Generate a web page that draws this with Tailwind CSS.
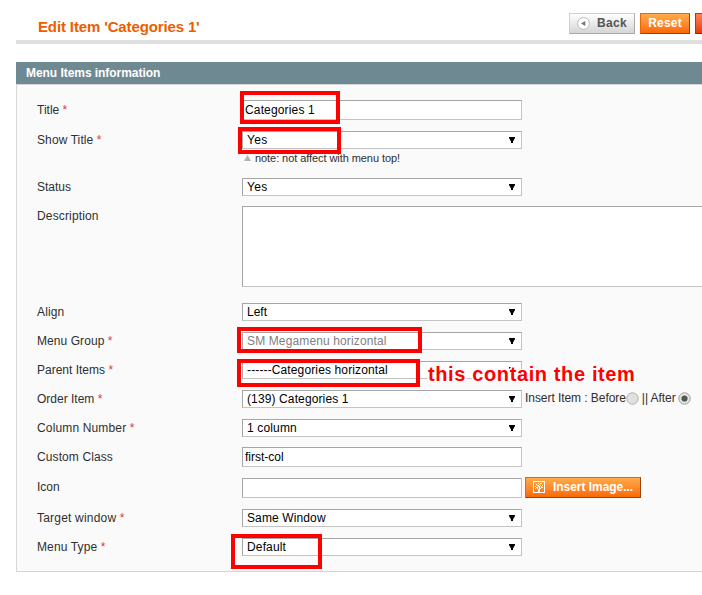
<!DOCTYPE html>
<html lang="en">
<head>
<meta charset="utf-8">
<title>Edit Item</title>
<script src="https://cdn.jsdelivr.net/npm/@tailwindcss/browser@4"></script>
</head>
<body class="relative h-[595px] w-[702px] overflow-hidden bg-white font-['Liberation_Sans',Arial,sans-serif] text-[12px] leading-[18px] text-[#2f2f2f]">
<svg class="hidden"><symbol id="arrow" viewBox="0 0 6 6"><path d="M0 0h6v1L4 4.5V6H2V4.5L0 1z"/></symbol></svg>

<header class="ml-4 flex h-11 items-start justify-between border-b-4 border-[#dfdfdf] pl-[22px]">
  <h1 class="pt-[18px] text-[15px] leading-[18px] font-bold tracking-[-0.13px] whitespace-nowrap text-[#eb5e00]">Edit Item 'Categories 1'</h1>
  <div class="flex gap-[5px] pt-[13px]">
    <button class="flex h-[21px] w-[66px] items-center border border-t-[#cfcfcf] border-r-[#a9a9a9] border-b-[#a9a9a9] border-l-[#cfcfcf] bg-linear-to-b from-white to-[#d5d5d5] pl-[7px] font-bold tracking-[0.3px] text-[#555]">
      <svg class="mr-[7px] size-[13px]" viewBox="0 0 13 13"><circle cx="6.5" cy="6.5" r="5.9" fill="#fff" stroke="#bbb"/><path d="M8.3 4v5L4 6.5z" fill="#777"/></svg><span class="pb-px leading-[18px]">Back</span></button>
    <button class="flex h-[21px] w-[50px] justify-center border border-t-[#ed6502] border-r-[#a04300] border-b-[#a04300] border-l-[#ed6502] bg-linear-to-b from-[#ffac47] to-[#fa6800] leading-[18px] font-bold tracking-[0.2px] text-white">Reset</button>
    <span class="h-[21px] w-[7px] border border-r-0 border-t-[#d43300] border-b-[#a02000] border-l-[#c83000] bg-linear-to-b from-[#ff8050] to-[#e83a00]"></span>
  </div>
</header>

<section class="mt-[18px] ml-4">
  <h2 class="h-[22px] bg-[#6f8992] pl-[10px] leading-[22px] font-bold tracking-[-0.05px] text-white">Menu Items information</h2>
  <div class="flex h-[488px] flex-col border border-r-0 border-[#d6d6d6] bg-[#fafafa] pt-[15px] pl-5">
    <div class="mb-[11px] flex h-5 items-center"><label class="w-[205px]">Title <span class="text-[#d93a40]">*</span></label><div class="h-5 w-[280px] border border-t-[#a6a6a6] border-r-[#c4c4c4] border-b-[#c4c4c4] border-l-[#a6a6a6] bg-white pl-[2px] tracking-[0.15px] text-black">Categories 1</div></div>
    <div class="flex h-[18px] items-center"><label class="w-[205px] tracking-[0.1px]">Show Title <span class="text-[#d93a40]">*</span></label><div class="flex h-[18px] w-[280px] items-center justify-between border border-t-[#a6a6a6] border-r-[#c4c4c4] border-b-[#c4c4c4] border-l-[#a6a6a6] bg-white pr-[6px] pl-1 tracking-[0.3px] text-black">Yes<svg class="size-[6px]"><use href="#arrow"/></svg></div></div>
    <p class="flex h-[29px] items-start gap-1 pl-[207px] text-[11px] leading-[18px] tracking-[-0.07px]"><svg class="mt-[6px] h-[6px] w-[7px]" viewBox="0 0 7 6"><path d="M3.5 0L7 6H0z" fill="#a7b5ba"/></svg>note: not affect with menu top!</p>
    <div class="mb-[10px] flex h-[18px] items-center"><label class="w-[205px]">Status</label><div class="flex h-[18px] w-[280px] items-center justify-between border border-t-[#a6a6a6] border-r-[#c4c4c4] border-b-[#c4c4c4] border-l-[#a6a6a6] bg-white pr-[6px] pl-1 tracking-[0.3px] text-black">Yes<svg class="size-[6px]"><use href="#arrow"/></svg></div></div>
    <div class="mb-4 flex h-[81px] items-start"><label class="w-[205px] pt-px tracking-[0.15px]">Description</label><div class="h-[81px] flex-1 border border-r-0 border-t-[#a6a6a6] border-b-[#c4c4c4] border-l-[#a6a6a6] bg-white"></div></div>
    <div class="mb-[11px] flex h-[18px] items-center"><label class="w-[205px] tracking-[0.15px]">Align</label><div class="flex h-[18px] w-[280px] items-center justify-between border border-t-[#a6a6a6] border-r-[#c4c4c4] border-b-[#c4c4c4] border-l-[#a6a6a6] bg-white pr-[6px] pl-1 text-black">Left<svg class="size-[6px]"><use href="#arrow"/></svg></div></div>
    <div class="mb-[11px] flex h-[18px] items-center"><label class="w-[205px] tracking-[0.07px]">Menu Group <span class="text-[#d93a40]">*</span></label><div class="flex h-[18px] w-[280px] items-center justify-between border border-t-[#a6a6a6] border-r-[#c4c4c4] border-b-[#c4c4c4] border-l-[#a6a6a6] bg-white pr-[6px] pl-1 text-black"><span class="tracking-[0.13px] text-[#808080]">SM Megamenu horizontal</span><svg class="size-[6px]"><use href="#arrow"/></svg></div></div>
    <div class="mb-[11px] flex h-[18px] items-center"><label class="w-[205px]">Parent Items <span class="text-[#d93a40]">*</span></label><div class="flex h-[18px] w-[280px] items-center justify-between border border-t-[#a6a6a6] border-r-[#c4c4c4] border-b-[#c4c4c4] border-l-[#a6a6a6] bg-white pr-[6px] pl-1 tracking-[0.13px] text-black">------Categories horizontal<svg class="size-[6px]"><use href="#arrow"/></svg></div></div>
    <div class="mb-[11px] flex h-[18px] items-center"><label class="w-[205px]">Order Item <span class="text-[#d93a40]">*</span></label><div class="flex h-[18px] w-[280px] items-center justify-between border border-t-[#a6a6a6] border-r-[#c4c4c4] border-b-[#c4c4c4] border-l-[#a6a6a6] bg-white pr-[6px] pl-1 tracking-[0.12px] text-black">(139) Categories 1<svg class="size-[6px]"><use href="#arrow"/></svg></div>
      <div class="ml-[3px] flex items-center pb-[2px] tracking-[-0.06px] whitespace-nowrap">Insert Item : Before<svg class="mr-[3px] size-[13px]" viewBox="0 0 13 13"><circle cx="6.5" cy="6.5" r="5.7" fill="#e1e1e1" stroke="#b0b0b0"/></svg>|| After<svg class="ml-[2px] size-[13px]" viewBox="0 0 13 13"><circle cx="6.5" cy="6.5" r="5.7" fill="#e6e6e6" stroke="#9a9a9a"/><circle cx="6.5" cy="6.5" r="3.1" fill="#555"/></svg></div></div>
    <div class="mb-[10px] flex h-[18px] items-center"><label class="w-[205px] tracking-[0.15px]">Column Number <span class="text-[#d93a40]">*</span></label><div class="flex h-[18px] w-[280px] items-center justify-between border border-t-[#a6a6a6] border-r-[#c4c4c4] border-b-[#c4c4c4] border-l-[#a6a6a6] bg-white pr-[6px] pl-1 tracking-[0.15px] text-black">1 column<svg class="size-[6px]"><use href="#arrow"/></svg></div></div>
    <div class="mb-[11px] flex h-5 items-center"><label class="w-[205px] tracking-[0.1px]">Custom Class</label><div class="h-5 w-[280px] border border-t-[#a6a6a6] border-r-[#c4c4c4] border-b-[#c4c4c4] border-l-[#a6a6a6] bg-white pl-[2px] text-black">first-col</div></div>
    <div class="mb-[11px] flex h-5 items-end"><label class="w-[205px] self-center pb-[2px]">Icon</label><div class="h-5 w-[280px] border border-t-[#a6a6a6] border-r-[#c4c4c4] border-b-[#c4c4c4] border-l-[#a6a6a6] bg-white"></div>
      <button class="ml-[3px] flex h-[21px] w-[116px] items-start border border-t-[#ed6502] border-r-[#a04300] border-b-[#a04300] border-l-[#ed6502] bg-linear-to-b from-[#ffac47] to-[#fa6800] pl-[7px] font-bold whitespace-nowrap text-white"><svg class="mt-[3px] mr-2 size-3" viewBox="0 0 12 12" fill="none" stroke="#fff" shape-rendering="crispEdges"><path d="M.5.5h11v11H.5z"/><path d="M5 2.5h1M7 2.5h2M3 3.5h1M6 3.5h1M4 4.5h2M7 4.5h1M9 4.5h1M2 5.5h1M5 5.5h2M8 5.5h1M3 6.5h2M6 6.5h1M8 6.5h2M2 7.5h1M4 7.5h1M6 7.5h2M5 8.5h2M5 9.5h2M5 10.5h2"/></svg><span class="leading-[18px] tracking-[-0.04px]">Insert Image...</span></button></div>
    <div class="mb-[11px] flex h-[18px] items-center"><label class="w-[205px] tracking-[0.2px]">Target window <span class="text-[#d93a40]">*</span></label><div class="flex h-[18px] w-[280px] items-center justify-between border border-t-[#a6a6a6] border-r-[#c4c4c4] border-b-[#c4c4c4] border-l-[#a6a6a6] bg-white pr-[6px] pl-1 tracking-[0.12px] text-black">Same Window<svg class="size-[6px]"><use href="#arrow"/></svg></div></div>
    <div class="flex h-[18px] items-center"><label class="w-[205px] tracking-[0.12px]">Menu Type <span class="text-[#d93a40]">*</span></label><div class="flex h-[18px] w-[280px] items-center justify-between border border-t-[#a6a6a6] border-r-[#c4c4c4] border-b-[#c4c4c4] border-l-[#a6a6a6] bg-white pr-[6px] pl-1 tracking-[0.15px] text-black">Default<svg class="size-[6px]"><use href="#arrow"/></svg></div></div>
  </div>
</section>

<!-- Callouts over the form -->
<div class="absolute top-[91px] left-[240px] h-[33px] w-[100px] border-4 border-[#f00]"></div>
<div class="absolute top-[127px] left-[238px] h-[27px] w-[103px] border-4 border-[#f00]"></div>
<div class="absolute top-[327px] left-[237px] h-[26px] w-[185px] border-4 border-[#f00]"></div>
<div class="absolute top-[359px] left-[237px] h-[28px] w-[183px] border-4 border-[#f00]"></div>
<div class="absolute top-[534px] left-[231px] h-[35px] w-[91px] border-4 border-[#f00]"></div>
<div class="absolute top-[362px] left-[428px] text-[20px] leading-6 font-bold tracking-[0.62px] whitespace-nowrap text-[#f00] [text-shadow:1px_1px_0_#fff,-1px_-1px_0_#fff,1px_-1px_0_#fff,-1px_1px_0_#fff,2px_0_0_#fff,-2px_0_0_#fff]">this contain the item</div>
</body>
</html>
